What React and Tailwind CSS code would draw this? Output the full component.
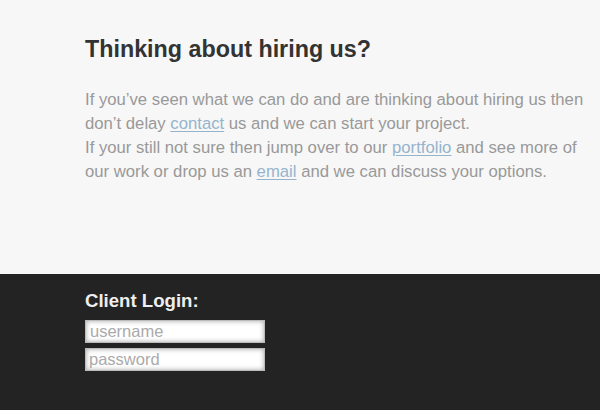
export default function App() {
  return (
    <div className="w-[600px] h-[410px] overflow-hidden flex flex-col font-['Liberation_Sans',Arial,sans-serif]">
      {/* Hire us section */}
      <section className="h-[274px] bg-[#f7f7f7] pl-[85px] pt-[34px]">
        <h2 className="text-[23.3px] leading-[30px] font-bold text-[#333333]">Thinking about hiring us?</h2>
        <p className="mt-[24px] w-[515px] text-[16.7px] leading-[24px] text-[#999999]">
          If you’ve seen what we can do and are thinking about hiring us then don’t delay{' '}
          <a href="#" className="text-[#95b4cc] underline underline-offset-2">contact</a> us and we can start your project.
          <br />
          If your still not sure then jump over to our{' '}
          <a href="#" className="text-[#95b4cc] underline underline-offset-2">portfolio</a> and see more of our work or drop us an{' '}
          <a href="#" className="text-[#95b4cc] underline underline-offset-2">email</a> and we can discuss your options.
        </p>
      </section>

      {/* Footer / client login */}
      <footer className="flex-1 bg-[#232323] pl-[85px] pt-[16px]">
        <h3 className="text-[18.6px] leading-[22px] font-bold text-[#eeeeee]">Client Login:</h3>
        <div className="mt-[8px] flex flex-col gap-[5px]">
          <input
            placeholder="username"
            className="w-[180px] h-[23px] px-[4px] bg-white border border-[#bbbbbb] text-[16.5px] leading-[21px] text-[#555] placeholder:text-[#aaaaaa] shadow-[inset_0_0_5px_rgba(0,0,0,0.35)] outline-none"
          />
          <input
            type="password"
            placeholder="password"
            className="w-[180px] h-[23px] px-[3px] bg-white border border-[#bbbbbb] text-[16.5px] leading-[21px] text-[#555] placeholder:text-[#aaaaaa] shadow-[inset_0_0_5px_rgba(0,0,0,0.35)] outline-none"
          />
        </div>
      </footer>
    </div>
  );
}
